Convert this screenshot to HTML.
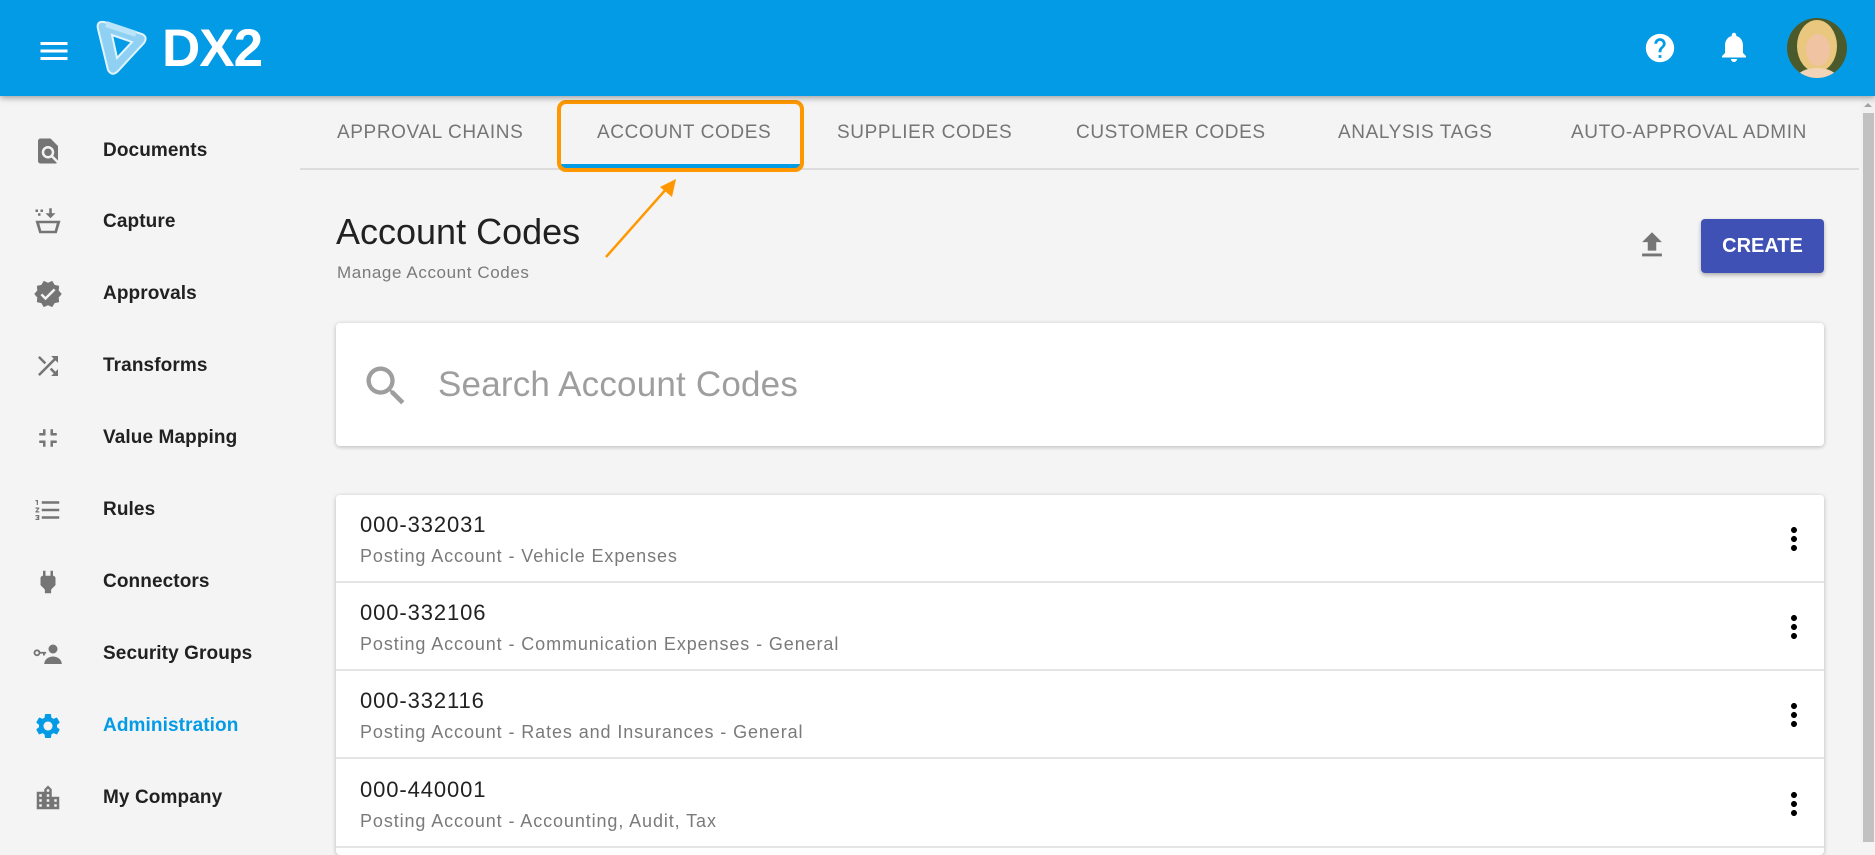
<!DOCTYPE html>
<html><head><meta charset="utf-8"><style>
*{box-sizing:border-box;margin:0;padding:0}
body{width:1875px;height:842px;overflow:hidden;background:#f4f4f4;font-family:"Liberation Sans",Roboto,Arial,sans-serif;position:relative}
.hdr{position:absolute;left:0;top:0;width:1875px;height:96px;background:#039be5;box-shadow:0 2px 6px rgba(0,0,0,.35);z-index:5}
.abs{position:absolute}
.nav{position:absolute;left:0;height:40px;width:290px}
.nav svg{position:absolute;left:33px;top:6px;width:30px;height:30px;fill:#757575}
.nav span{position:absolute;left:103px;top:10px;font-size:19px;color:#212121;font-weight:bold;letter-spacing:0.1px}
.tab{position:absolute;top:122px;font-size:19px;color:#757575;letter-spacing:.6px}
.row{position:absolute;left:336px;width:1488px;height:88px;border-bottom:2px solid #e5e5e5;background:#fff}
.row .c{position:absolute;left:24px;top:17px;font-size:22px;color:#212121;letter-spacing:.9px}
.row .d{position:absolute;left:24px;top:51px;font-size:18px;color:#7a7a7a;letter-spacing:.9px}
.row svg{position:absolute;left:1440px;top:26px;width:36px;height:36px}
</style></head><body>
<div class="hdr">
 <svg class="abs" style="left:36px;top:33px" width="36" height="36" viewBox="0 0 24 24" fill="#fff"><path d="M3 18h18v-2H3v2zm0-5h18v-2H3v2zm0-7v2h18V6H3z"/></svg>
 <svg class="abs" style="left:96px;top:19px" width="54" height="58" viewBox="0 0 54 58"><path d="M8 3 L46 15 Q52 18 48 24 L22 52 Q16 58 12 51 L2 10 Q0 2 8 3Z" fill="#8fd0f3" stroke="#e1f4fd" stroke-width="2"/><path d="M16 16 L36 23 L21 39Z" fill="#039be5" stroke="#e1f4fd" stroke-width="2"/><path d="M10 5 L40 15" stroke="#b9e4fa" stroke-width="6"/></svg>
 <div class="abs" style="left:162px;top:18px;font-size:53px;font-weight:bold;color:#fff;letter-spacing:-1px">DX2</div>
 <svg class="abs" style="left:1643px;top:31px" width="34" height="34" viewBox="0 0 24 24" fill="#fff"><path d="M12 2C6.48 2 2 6.48 2 12s4.48 10 10 10 10-4.48 10-10S17.52 2 12 2zm1 17h-2v-2h2v2zm2.07-7.75l-.9.92C13.45 12.9 13 13.5 13 15h-2v-.5c0-1.1.45-2.1 1.17-2.83l1.24-1.26c.37-.36.59-.86.59-1.41 0-1.1-.9-2-2-2s-2 .9-2 2H8c0-2.21 1.79-4 4-4s4 1.79 4 4c0 .88-.36 1.68-.93 2.25z"/></svg>
 <svg class="abs" style="left:1716px;top:29px" width="36" height="36" viewBox="0 0 24 24" fill="#fff"><path d="M12 22c1.1 0 2-.9 2-2h-4c0 1.1.89 2 2 2zm6-6v-5c0-3.07-1.64-5.64-4.5-6.32V4c0-.83-.67-1.5-1.5-1.5s-1.5.67-1.5 1.5v.68C7.63 5.36 6 7.920 6 11v5l-2 2v1h16v-1l-2-2z"/></svg>
 <svg class="abs" style="left:1787px;top:18px" width="60" height="60" viewBox="0 0 60 60"><defs><clipPath id="cc"><circle cx="30" cy="30" r="30"/></clipPath></defs><g clip-path="url(#cc)"><rect width="60" height="60" fill="#4b5a2a"/><ellipse cx="30" cy="28" rx="20" ry="26" fill="#e9c77e"/><ellipse cx="31" cy="32" rx="12" ry="16" fill="#f0c4a3"/><ellipse cx="30" cy="60" rx="20" ry="10" fill="#f2d4b8"/></g></svg>
</div>

<div class="nav" style="top:130px"><svg viewBox="0 0 24 24"><path d="M20 19.59V8l-6-6H6c-1.1 0-1.99.9-1.99 2L4 20c0 1.1.89 2 1.990 2H18c.45 0 .85-.15 1.19-.4l-4.43-4.43c-.8.52-1.74.83-2.76.83-2.76 0-5-2.24-5-5s2.24-5 5-5 5 2.24 5 5c0 1.02-.31 1.96-.83 2.75L20 19.59zM9 13c0 1.66 1.34 3 3 3s3-1.34 3-3-1.34-3-3-3-3 1.34-3 3z"/></svg><span>Documents</span></div>
<div class="nav" style="top:201px"><svg viewBox="0 0 24 24"><path d="M2 2h2v2H2zM6 2h2v2H6zM4 5h2v2H4zM13 1h2v4h3l-4 4-4-4h3zM2 11h20l-3 10H5zM5 13l1.6 6h10.8l1.6-6z" fill-rule="evenodd"/></svg><span>Capture</span></div>
<div class="nav" style="top:273px"><svg viewBox="0 0 24 24"><path d="M23 12l-2.44-2.78.34-3.68-3.61-.82-1.89-3.18L12 3 8.6 1.54 6.71 4.72l-3.61.81.34 3.68L1 12l2.44 2.78-.34 3.69 3.61.82 1.89 3.18L12 21l3.4 1.46 1.89-3.18 3.61-.82-.34-3.68L23 12zm-13 5l-4-4 1.41-1.41L10 14.17l6.59-6.59L18 9l-8 8z"/></svg><span>Approvals</span></div>
<div class="nav" style="top:345px"><svg viewBox="0 0 24 24"><path d="M10.59 9.17L5.41 4 4 5.41l5.17 5.17 1.42-1.41zM14.5 4l2.04 2.04L4 18.59 5.41 20 17.96 7.46 20 9.5V4h-5.5zm.33 9.41l-1.41 1.41 3.13 3.13L14.5 20H20v-5.5l-2.04 2.04-3.13-3.13z"/></svg><span>Transforms</span></div>
<div class="nav" style="top:417px"><svg viewBox="0 0 24 24"><path d="M5 16h3v3h2v-5H5v2zm3-8H5v2h5V5H8v3zm6 11h2v-3h3v-2h-5v5zm2-11V5h-2v5h5V8h-3z"/></svg><span>Value Mapping</span></div>
<div class="nav" style="top:489px"><svg viewBox="0 0 24 24"><path d="M2 17h2v.5H3v1h1v.5H2v1h3v-4H2v1zm1-9h1V4H2v1h1v3zm-1 3h1.8L2 13.1v.9h3v-1H3.2L5 10.9V10H2v1zm5-6v2h14V5H7zm0 14h14v-2H7v2zm0-6h14v-2H7v2z"/></svg><span>Rules</span></div>
<div class="nav" style="top:561px"><svg viewBox="0 0 24 24"><path d="M16 7V3h-2v4h-4V3H8v4C6.9 7 6 7.9 6 9v5.5L9.5 18v3h5v-3l3.5-3.5V9c0-1.1-.9-2-2-2z"/></svg><span>Connectors</span></div>
<div class="nav" style="top:633px"><svg viewBox="0 0 24 24"><circle cx="16" cy="8" r="3.6"/><path d="M9 20c0-4 4-6 7-6s7 2 7 6z"/><circle cx="3.2" cy="11" r="2" fill="none" stroke="#757575" stroke-width="1.5"/><path d="M5 10.3h5.5v1.4H9.5v1.5H8v-1.5H5z"/></svg><span>Security Groups</span></div>
<div class="nav" style="top:705px"><svg viewBox="0 0 24 24" style="fill:#039be5"><path d="M19.14 12.94c.04-.3.06-.61.06-.94 0-.32-.02-.64-.07-.94l2.03-1.58c.18-.14.23-.41.12-.61l-1.920-3.32c-.12-.22-.37-.29-.59-.22l-2.39.96c-.5-.38-1.03-.7-1.62-.94l-.36-2.54c-.04-.24-.24-.41-.48-.41h-3.84c-.24 0-.43.17-.47.41l-.36 2.54c-.59.24-1.13.57-1.62.94l-2.39-.96c-.22-.08-.47 0-.59.22L2.74 8.87c-.12.21-.08.47.12.61l2.03 1.58c-.05.3-.09.63-.09.94s.02.64.07.94l-2.03 1.58c-.18.14-.23.41-.12.61l1.92 3.32c.12.22.37.29.59.22l2.39-.96c.5.38 1.03.7 1.62.94l.36 2.54c.05.24.24.41.48.41h3.84c.24 0 .44-.17.47-.41l.36-2.54c.59-.24 1.13-.56 1.62-.94l2.39.96c.22.08.47 0 .59-.22l1.92-3.32c.12-.22.07-.47-.12-.61l-2.01-1.58zM12 15.6c-1.98 0-3.6-1.62-3.6-3.6s1.62-3.6 3.6-3.6 3.6 1.62 3.6 3.6-1.62 3.6-3.6 3.6z"/></svg><span style="color:#039be5">Administration</span></div>
<div class="nav" style="top:777px"><svg viewBox="0 0 24 24"><path d="M15 11V5l-3-3-3 3v2H3v14h18V11h-6zm-8 8H5v-2h2v2zm0-4H5v-2h2v2zm0-4H5V9h2v2zm6 8h-2v-2h2v2zm0-4h-2v-2h2v2zm0-4h-2V9h2v2zm0-4h-2V5h2v2zm6 12h-2v-2h2v2zm0-4h-2v-2h2v2z"/></svg><span>My Company</span></div>

<div class="tab" style="left:337px">APPROVAL CHAINS</div>
<div class="tab" style="left:597px">ACCOUNT CODES</div>
<div class="tab" style="left:837px">SUPPLIER CODES</div>
<div class="tab" style="left:1076px">CUSTOMER CODES</div>
<div class="tab" style="left:1338px">ANALYSIS TAGS</div>
<div class="tab" style="left:1571px">AUTO-APPROVAL ADMIN</div>
<div class="abs" style="left:300px;top:168px;width:1559px;height:2px;background:#dcdcdc"></div>
<div class="abs" style="left:561px;top:164px;width:240px;height:4px;background:#039be5"></div>
<div class="abs" style="left:557px;top:100px;width:247px;height:72px;border:4px solid #ff9800;border-radius:9px"></div>
<svg class="abs" style="left:600px;top:175px" width="90" height="90"><line x1="6" y1="82" x2="68" y2="12" stroke="#ff9800" stroke-width="2.5"/><path d="M76 4 L72 22 L60 12Z" fill="#ff9800"/></svg>

<div class="abs" style="left:336px;top:211px;font-size:36px;color:#212121">Account Codes</div>
<div class="abs" style="left:337px;top:263px;font-size:17px;color:#7a7a7a;letter-spacing:.6px">Manage Account Codes</div>
<svg class="abs" style="left:1635px;top:228px" width="34" height="34" viewBox="0 0 24 24" fill="#757575"><path d="M9 16h6v-6h4l-7-7-7 7h4zm-4 2h14v2H5z"/></svg>
<div class="abs" style="left:1701px;top:219px;width:123px;height:54px;background:#3f51b5;border-radius:4px;box-shadow:0 2px 4px rgba(0,0,0,.3);color:#fff;font-size:20px;font-weight:bold;text-align:center;line-height:54px">CREATE</div>

<div class="abs" style="left:336px;top:323px;width:1488px;height:123px;background:#fff;border-radius:4px;box-shadow:0 1px 4px rgba(0,0,0,.25)"></div>
<svg class="abs" style="left:360px;top:360px" width="52" height="52" viewBox="0 0 24 24" fill="#9e9e9e"><path d="M15.5 14h-.79l-.28-.27C15.41 12.59 16 11.11 16 9.5 16 5.91 13.09 3 9.5 3S3 5.91 3 9.5 5.91 16 9.5 16c1.61 0 3.09-.59 4.23-1.57l.27.28v.79l5 4.99L20.49 19l-4.99-5zm-6 0C7.01 14 5 11.99 5 9.5S7.01 5 9.5 5 14 7.01 14 9.5 11.99 14 9.5 14z"/></svg>
<div class="abs" style="left:438px;top:365px;font-size:35px;color:#9e9e9e;letter-spacing:.2px">Search Account Codes</div>

<div class="abs" style="left:336px;top:495px;width:1488px;height:360px;background:#fff;border-radius:4px;box-shadow:0 1px 4px rgba(0,0,0,.25)"></div>
<div class="row" style="top:495px;border-radius:4px 4px 0 0"><div class="c">000-332031</div><div class="d">Posting Account - Vehicle Expenses</div><svg viewBox="0 0 24 24"><path d="M12 8c1.1 0 2-.9 2-2s-.9-2-2-2-2 .9-2 2 .9 2 2 2zm0 2c-1.1 0-2 .9-2 2s.9 2 2 2 2-.9 2-2-.9-2-2-2zm0 6c-1.1 0-2 .9-2 2s.9 2 2 2 2-.9 2-2-.9-2-2-2z"/></svg></div>
<div class="row" style="top:583px"><div class="c">000-332106</div><div class="d">Posting Account - Communication Expenses - General</div><svg viewBox="0 0 24 24"><path d="M12 8c1.1 0 2-.9 2-2s-.9-2-2-2-2 .9-2 2 .9 2 2 2zm0 2c-1.1 0-2 .9-2 2s.9 2 2 2 2-.9 2-2-.9-2-2-2zm0 6c-1.1 0-2 .9-2 2s.9 2 2 2 2-.9 2-2-.9-2-2-2z"/></svg></div>
<div class="row" style="top:671px"><div class="c">000-332116</div><div class="d">Posting Account - Rates and Insurances - General</div><svg viewBox="0 0 24 24"><path d="M12 8c1.1 0 2-.9 2-2s-.9-2-2-2-2 .9-2 2 .9 2 2 2zm0 2c-1.1 0-2 .9-2 2s.9 2 2 2 2-.9 2-2-.9-2-2-2zm0 6c-1.1 0-2 .9-2 2s.9 2 2 2 2-.9 2-2-.9-2-2-2z"/></svg></div>
<div class="row" style="top:760px"><div class="c">000-440001</div><div class="d">Posting Account - Accounting, Audit, Tax</div><svg viewBox="0 0 24 24"><path d="M12 8c1.1 0 2-.9 2-2s-.9-2-2-2-2 .9-2 2 .9 2 2 2zm0 2c-1.1 0-2 .9-2 2s.9 2 2 2 2-.9 2-2-.9-2-2-2zm0 6c-1.1 0-2 .9-2 2s.9 2 2 2 2-.9 2-2-.9-2-2-2z"/></svg></div>

<div class="abs" style="left:1861px;top:96px;width:14px;height:746px;background:#f1f1f1"></div>
<div class="abs" style="left:1863px;top:113px;width:11px;height:729px;background:#c1c1c1"></div>
<svg class="abs" style="left:1863px;top:101px" width="10" height="8"><path d="M1 6 L5 2 L9 6Z" fill="#a3a3a3"/></svg>
</body></html>
